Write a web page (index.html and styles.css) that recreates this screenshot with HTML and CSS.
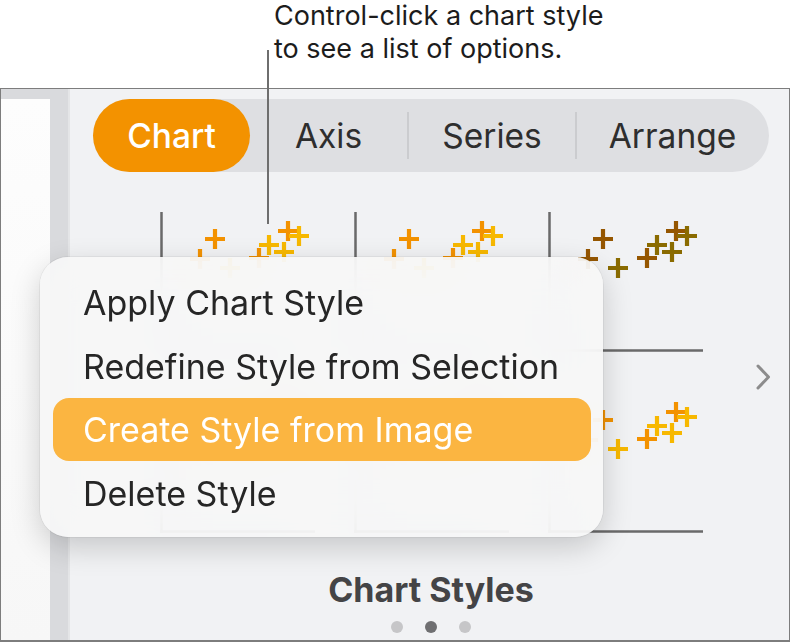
FILE: index.html
```html
<!DOCTYPE html>
<html>
<head>
<meta charset="utf-8">
<link rel="stylesheet" href="styles.css">
</head>
<body>
<header class="callout">
  <p class="callout-text">Control-click a chart style<br>to see a list of options.</p>
  <span class="leader"></span>
</header>
<div class="window">
  <aside class="sidebar"><div class="sidebar-page"></div></aside>
  <section class="inspector">
    <nav class="tabs">
      <span class="tab tab-active">Chart</span>
      <span class="tab">Axis</span>
      <span class="sep"></span>
      <span class="tab">Series</span>
      <span class="sep"></span>
      <span class="tab">Arrange</span>
    </nav>
    <div class="styles">
      <div class="style-grid">
        <svg class="thumb warm" viewBox="0 0 155 140"><path class="axis" d="M1.5 0V140M0 138.5H155"/><path class="p1" d="M30 47h20M40 37v20M45 27h20M55 17v20M89 46h20M99 36v20M118 19h20M128 9v20"/><path class="p2" d="M60 56h20M70 46v20M99 33h20M109 23v20M114 40h20M124 30v20M129 24h20M139 14v20"/></svg>
        <svg class="thumb warm" viewBox="0 0 155 140"><path class="axis" d="M1.5 0V140M0 138.5H155"/><path class="p1" d="M30 47h20M40 37v20M45 27h20M55 17v20M89 46h20M99 36v20M118 19h20M128 9v20"/><path class="p2" d="M60 56h20M70 46v20M99 33h20M109 23v20M114 40h20M124 30v20M129 24h20M139 14v20"/></svg>
        <svg class="thumb earth" viewBox="0 0 155 140"><path class="axis" d="M1.5 0V140M0 138.5H155"/><path class="p1" d="M30 47h20M40 37v20M45 27h20M55 17v20M89 46h20M99 36v20M118 19h20M128 9v20"/><path class="p2" d="M60 56h20M70 46v20M99 33h20M109 23v20M114 40h20M124 30v20M129 24h20M139 14v20"/></svg>
        <svg class="thumb warm" viewBox="0 0 155 140"><path class="axis" d="M1.5 0V140M0 138.5H155"/><path class="p1" d="M30 47h20M40 37v20M45 27h20M55 17v20M89 46h20M99 36v20M118 19h20M128 9v20"/><path class="p2" d="M60 56h20M70 46v20M99 33h20M109 23v20M114 40h20M124 30v20M129 24h20M139 14v20"/></svg>
        <svg class="thumb warm" viewBox="0 0 155 140"><path class="axis" d="M1.5 0V140M0 138.5H155"/><path class="p1" d="M30 47h20M40 37v20M45 27h20M55 17v20M89 46h20M99 36v20M118 19h20M128 9v20"/><path class="p2" d="M60 56h20M70 46v20M99 33h20M109 23v20M114 40h20M124 30v20M129 24h20M139 14v20"/></svg>
        <svg class="thumb warm" viewBox="0 0 155 140"><path class="axis" d="M1.5 0V140M0 138.5H155"/><path class="p1" d="M30 47h20M40 37v20M45 27h20M55 17v20M89 46h20M99 36v20M118 19h20M128 9v20"/><path class="p2" d="M60 56h20M70 46v20M99 33h20M109 23v20M114 40h20M124 30v20M129 24h20M139 14v20"/></svg>
      </div>
      <svg class="chevron" viewBox="0 0 16 28"><path d="M3 3L13.5 14L3 25"/></svg>
    </div>
    <h2 class="styles-title">Chart Styles</h2>
    <div class="dots"><span class="dot"></span><span class="dot dot-on"></span><span class="dot"></span></div>
  </section>
</div>
<ul class="menu">
  <li class="menu-item">Apply Chart Style</li>
  <li class="menu-item">Redefine Style from Selection</li>
  <li class="menu-item menu-item-active">Create Style from Image</li>
  <li class="menu-item">Delete Style</li>
</ul>
</body>
</html>
```

FILE: styles.css
```css
html, body {
  margin: 0;
  padding: 0;
  background: #ffffff;
}
body {
  width: 790px;
  height: 644px;
  overflow: hidden;
  font-family: "Inter", "Noto Sans", sans-serif;
  position: relative;
}
.callout {
  height: 89px;
  box-sizing: border-box;
  padding: 0 0 0 274px;
}
.callout-text {
  margin: -1px 0 0 0;
  font-size: 27px;
  line-height: 33px;
  color: #1c1c1c;
}
.leader {
  position: absolute;
  left: 267px;
  top: 50px;
  width: 2px;
  height: 174px;
  background: #6e6e6e;
  z-index: 5;
}
.window {
  display: flex;
  height: 554px;
  box-sizing: border-box;
  border: 1px solid #7d7d7d;
  border-bottom-width: 2px;
}
.sidebar {
  flex-shrink: 0;
  width: 67px;
  background: #d9dadd;
  border-right: 2px solid #e4e5e7;
  padding-top: 10px;
  box-sizing: content-box;
}
.sidebar-page {
  width: 49px;
  height: 100%;
  background: linear-gradient(#fdfdfd, #f7f7f7);
}
.inspector {
  flex: 1;
  min-width: 0;
  background: #f1f2f4;
  padding: 10px 20px 0 23px;
  display: flex;
  flex-direction: column;
}
.tabs {
  display: grid;
  grid-template-columns: 157px 157px 2px 166px 2px 191px;
  align-items: center;
  height: 73px;
  background: #dedfe2;
  border-radius: 37px;
}
.tab {
  display: flex;
  align-items: center;
  justify-content: center;
  height: 73px;
  font-size: 33.5px;
  color: #2e2e2e;
}
.tab-active {
  background: #f39200;
  color: #ffffff;
  border-radius: 37px;
  font-weight: 500;
}
.sep {
  height: 47px;
  background: #cbcccf;
}
.styles {
  display: flex;
  align-items: center;
  margin-top: 40px;
  padding-left: 67px;
}
.style-grid {
  flex-shrink: 0;
  display: grid;
  grid-template-columns: repeat(3, 155px);
  grid-template-rows: 140px 140px;
  column-gap: 39px;
  row-gap: 41px;
}
.thumb {
  width: 155px;
  height: 140px;
  display: block;
  fill: none;
}
.thumb .axis {
  stroke: #6a6a6a;
  stroke-width: 2.5;
}
.thumb .p1, .thumb .p2 {
  stroke-width: 4.2;
}
.warm .p1 { stroke: #f39200; }
.warm .p2 { stroke: #f7b800; }
.earth .p1 { stroke: #955600; }
.earth .p2 { stroke: #8a6b00; }
.chevron {
  flex-shrink: 0;
  width: 16px;
  height: 28px;
  margin-left: 52px;
  margin-top: 8px;
  fill: none;
  stroke: #8c8c8c;
  stroke-width: 3;
  stroke-linecap: round;
  stroke-linejoin: round;
}
.styles-title {
  margin: 37px 0 0 0;
  font-size: 34px;
  line-height: 40px;
  font-weight: 700;
  color: #444446;
  text-align: center;
}
.dots {
  display: flex;
  justify-content: center;
  gap: 22px;
  margin: 11px 0 0 0;
}
.dot {
  width: 12px;
  height: 12px;
  border-radius: 50%;
  background: #c6c6c8;
}
.dot-on {
  background: #6f6f71;
}
.menu {
  position: absolute;
  left: 40px;
  top: 257px;
  width: 563px;
  height: 280px;
  box-sizing: border-box;
  margin: 0;
  padding: 13px 12px 11px 13px;
  list-style: none;
  border-radius: 28px;
  background: rgba(247, 247, 247, 0.9);
  backdrop-filter: blur(24px);
  -webkit-backdrop-filter: blur(24px);
  box-shadow: 0 10px 30px rgba(0, 0, 0, 0.18), 0 0 0 1px rgba(0, 0, 0, 0.05);
  z-index: 10;
}
.menu-item {
  height: 64px;
  display: flex;
  align-items: center;
  padding-left: 30px;
  font-size: 34px;
  color: #262626;
  border-radius: 16px;
}
.menu-item-active {
  background: #fbb541;
  color: #ffffff;
  height: 63px;
}
```
